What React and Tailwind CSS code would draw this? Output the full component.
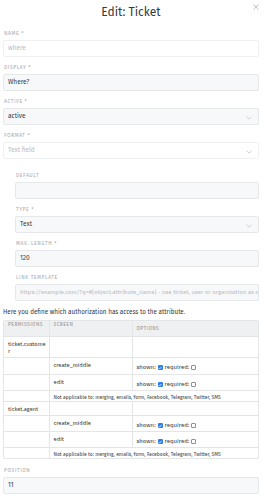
import React from "react";

function Label({ children, className = "" }) {
  return (
    <div
      className={
        "h-[8px] leading-[8px] mb-[3px] pl-[1px] text-[5px] tracking-[0.6px] text-[#a4a7aa] uppercase " +
        className
      }
    >
      {children}
    </div>
  );
}

function Chevron() {
  return (
    <svg width="6" height="4" viewBox="0 0 6 4" className="absolute right-[6px] top-[6.5px]">
      <path d="M0.5 0.8 L3 3 L5.5 0.8" fill="none" stroke="#c4c7ca" strokeWidth="0.8" />
    </svg>
  );
}

function Input({ children, muted = false, white = false, select = false, small = false }) {
  return (
    <div
      className={
        "relative h-[17px] mb-[6px] rounded-[2px] border px-[4px] flex items-center whitespace-nowrap overflow-hidden " +
        (small ? "text-[6px] " : "text-[6.5px] ") +
        (white ? "bg-white border-[#eef0f1] " : "bg-[#f7f8f9] border-[#e6e8ea] ") +
        (muted ? "text-[#b9bcbf]" : "text-[#38393a]")
      }
    >
      <span>{children}</span>
      {select && <Chevron />}
    </div>
  );
}

function Checked() {
  return (
    <span className="inline-flex items-center justify-center w-[5px] h-[5px] rounded-[1px] bg-[#2f7ff1] mx-[2px]">
      <svg width="4" height="4" viewBox="0 0 4 4">
        <path d="M0.8 2.1 L1.7 3 L3.3 1" fill="none" stroke="#fff" strokeWidth="0.7" />
      </svg>
    </span>
  );
}

function Unchecked() {
  return (
    <span className="inline-block w-[5px] h-[5px] rounded-[1px] border border-[#8d9093] bg-white mx-[2px]" />
  );
}

function Options() {
  return (
    <div className="flex items-center h-[10px] text-[6px] text-[#38393a] whitespace-nowrap">
      <span>shown:</span>
      <Checked />
      <span>required:</span>
      <Unchecked />
    </div>
  );
}

const td = "border-r border-b border-[#e3e5e7] align-top px-[4px]";

function ScreenRow({ screen, h }) {
  return (
    <tr>
      <td className={td} style={{ height: h }}></td>
      <td className={td + " pt-[4px] text-[5.8px] leading-[7px]"}>{screen}</td>
      <td className={"border-b border-[#e3e5e7] align-top px-[4px] pt-[5px]"}>
        <Options />
      </td>
    </tr>
  );
}

function NARow({ h, last }) {
  return (
    <tr>
      <td className={"border-r border-[#e3e5e7] " + (last ? "" : "border-b")} style={{ height: h }}></td>
      <td
        colSpan={2}
        className={
          "align-top px-[4px] pt-[3px] text-[5px] leading-[6px] text-[#38393a] whitespace-nowrap border-[#e3e5e7] " +
          (last ? "" : "border-b")
        }
      >
        Not applicable to: merging, emails, form, Facebook, Telegram, Twitter, SMS
      </td>
    </tr>
  );
}

function PermRow({ name, h }) {
  return (
    <tr>
      <td
        className="border-r border-b border-[#e3e5e7] align-top pl-[4px] pr-[1px] pt-[4px] text-[5.7px] leading-[7px] break-all"
        style={{ height: h }}
      >
        {name}
      </td>
      <td className={td}></td>
      <td className="border-b border-[#e3e5e7]"></td>
    </tr>
  );
}

export default function App() {
  return (
    <div className="relative w-[264px] h-[500px] bg-white overflow-hidden font-['Fira_Sans','Open_Sans',sans-serif] text-[#38393a]">
      <svg width="6" height="6" viewBox="0 0 6 6" className="absolute left-[253px] top-[3.5px]">
        <path d="M0.5 0.5 L5.5 5.5 M5.5 0.5 L0.5 5.5" stroke="#a8abae" strokeWidth="0.7" />
      </svg>
      <div className="pl-[3px] pr-[5px]">
        <div className="h-[29px] pt-[6px] text-center text-[12px] leading-[13px] text-[#38393a]">
          Edit: Ticket
        </div>

        <Label>Name *</Label>
        <Input muted white>where</Input>

        <Label>Display *</Label>
        <Input>Where?</Input>

        <Label>Active *</Label>
        <Input select>active</Input>

        <Label>Format *</Label>
        <Input select muted white>Text field</Input>

        <div className="pl-[12px] pt-[6px]">
          <Label>Default</Label>
          <Input></Input>

          <Label>Type *</Label>
          <Input select>Text</Input>

          <Label>Max. Length *</Label>
          <Input>120</Input>

          <Label>Link Template</Label>
          <Input muted small>
            https://example.com/?q=#{"{"}object.attribute_name{"}"} - use ticket, user or organization as object
          </Input>
        </div>

        <div className="h-[13px] leading-[10px] text-[6.3px] text-[#38393a] whitespace-nowrap">
          Here you define which authorization has access to the attribute.
        </div>

        <div className="rounded-[2px] border border-[#e3e5e7] overflow-hidden">
          <table className="w-full table-fixed border-collapse">
            <colgroup>
              <col className="w-[45px]" />
              <col className="w-[83px]" />
              <col />
            </colgroup>
            <thead>
              <tr className="bg-[#eff0f1]">
                <th className={td + " h-[15px] align-middle text-left font-normal text-[5px] tracking-[0.4px] text-[#8f9295] uppercase"}>
                  Permissions
                </th>
                <th className={td + " align-middle text-left font-normal text-[5px] tracking-[0.4px] text-[#8f9295] uppercase"}>
                  Screen
                </th>
                <th className="border-b border-[#e3e5e7] px-[4px] align-middle text-left font-normal text-[5px] tracking-[0.4px] text-[#8f9295] uppercase">
                  Options
                </th>
              </tr>
            </thead>
            <tbody>
              <PermRow name="ticket.customer" h="21px" />
              <ScreenRow screen="create_middle" h="17px" />
              <ScreenRow screen="edit" h="16px" />
              <NARow h="11px" />
              <PermRow name="ticket.agent" h="14px" />
              <ScreenRow screen="create_middle" h="16px" />
              <ScreenRow screen="edit" h="16px" />
              <NARow h="11px" last />
            </tbody>
          </table>
        </div>

        <div className="h-[7px]" />
        <Label>Position</Label>
        <Input>11</Input>
      </div>
    </div>
  );
}
